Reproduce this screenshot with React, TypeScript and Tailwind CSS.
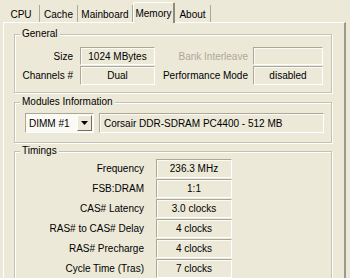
import React from 'react';

const tabs = [
  { label: 'CPU', w: 'w-[37px]' },
  { label: 'Cache', w: 'w-[38px]' },
  { label: 'Mainboard', w: 'w-[55px]' },
  { label: 'Memory', w: 'w-[42px]', active: true },
  { label: 'About', w: 'w-[36px]' },
];

const timings = [
  ['Frequency', '236.3 MHz'],
  ['FSB:DRAM', '1:1'],
  ['CAS# Latency', '3.0 clocks'],
  ['RAS# to CAS# Delay', '4 clocks'],
  ['RAS# Precharge', '4 clocks'],
  ['Cycle Time (Tras)', '7 clocks'],
];

function Field({ className = '', children }: { className?: string; children?: React.ReactNode }) {
  return (
    <div
      className={`flex items-center justify-center border border-t-[#aca899] border-l-[#aca899] border-b-white border-r-white shadow-[inset_1px_1px_0_#fbfaf5] ${className}`}
    >
      {children}
    </div>
  );
}

function GroupBox({
  title,
  className = '',
  children,
}: {
  title: string;
  className?: string;
  children?: React.ReactNode;
}) {
  return (
    <div
      className={`relative w-[318px] border border-[#c5c2b2] shadow-[inset_1px_1px_0_#fff,1px_1px_0_#fff] ${className}`}
    >
      <span className="absolute left-[5px] top-[-7px] bg-[#ece9d8] px-[2px] leading-[12px]">
        {title}
      </span>
      {children}
    </div>
  );
}

export default function App() {
  return (
    <div className="w-[350px] h-[278px] overflow-hidden bg-[#ece9d8] text-[10px] text-black font-['Liberation_Sans',Arial,sans-serif]">
      {/* Tabs */}
      <div className="flex items-end h-[22px] pl-[3px]">
        {tabs.map((t) =>
          t.active ? (
            <div
              key={t.label}
              className={`${t.w} h-[21px] -mb-[1px] relative z-10 flex items-start justify-center pt-[3px] bg-[#ece9d8] border-l border-t border-white border-r-2 border-r-[#8e8b7c] rounded-t-[2px]`}
            >
              {t.label}
            </div>
          ) : (
            <div
              key={t.label}
              className={`${t.w} h-[17px] flex items-start justify-center pt-[2px] border-r border-[#aca899]`}
            >
              {t.label}
            </div>
          )
        )}
      </div>

      {/* Page */}
      <div className="ml-[3px] w-[343px] h-[260px] border-t border-l border-white border-r-2 border-r-[#9d9a8a] pl-[10px] pt-[11px]">
        <GroupBox title="General" className="h-[59px] pt-[12px]">
          <div className="flex flex-col gap-[1px]">
            <div className="flex items-center h-[18px]">
              <div className="w-[58px] text-right">Size</div>
              <Field className="ml-[7px] w-[75px] h-[18px]">1024 MBytes</Field>
              <div className="w-[93px] text-right text-[#aca899]">Bank Interleave</div>
              <Field className="ml-[5px] w-[70px] h-[18px]" />
            </div>
            <div className="flex items-center h-[19px]">
              <div className="w-[58px] text-right">Channels #</div>
              <Field className="ml-[7px] w-[75px] h-[19px]">Dual</Field>
              <div className="w-[93px] text-right">Performance Mode</div>
              <Field className="ml-[5px] w-[70px] h-[19px]">disabled</Field>
            </div>
          </div>
        </GroupBox>

        <GroupBox title="Modules Information" className="mt-[9px] h-[41px] pt-[10px]">
          <div className="flex items-center pl-[10px]">
            <div className="flex items-center w-[69px] h-[20px] bg-[#fbfaf4] border border-t-[#aca899] border-l-[#aca899] border-b-white border-r-white">
              <span className="flex-1 pl-[3px]">DIMM #1</span>
              <div className="w-[15px] h-[16px] mr-[1px] flex items-center justify-center bg-[#ece9d8] border border-t-white border-l-white border-b-[#716f64] border-r-[#716f64]">
                <svg width="7" height="4" viewBox="0 0 7 4">
                  <path d="M0 0h7L3.5 4z" fill="#000" />
                </svg>
              </div>
            </div>
            <Field className="ml-[5px] w-[225px] h-[20px] !justify-start pl-[4px]">
              Corsair DDR-SDRAM PC4400 - 512 MB
            </Field>
          </div>
        </GroupBox>

        <GroupBox title="Timings" className="mt-[8px] h-[140px] pt-[7px]">
          <div className="flex flex-col gap-[1px]">
            {timings.map(([label, value]) => (
              <div key={label} className="flex items-center h-[19px]">
                <div className="w-[129px] text-right">{label}</div>
                <Field className="ml-[12px] w-[76px] h-[19px]">{value}</Field>
              </div>
            ))}
          </div>
        </GroupBox>
      </div>
    </div>
  );
}
